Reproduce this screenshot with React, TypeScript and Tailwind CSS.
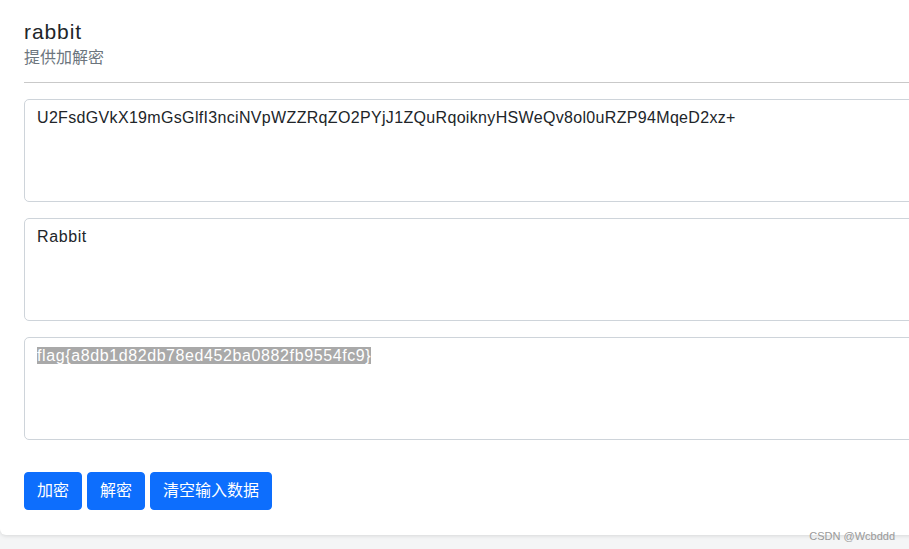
export default function App() {
  const font = { fontFamily: '"Liberation Sans", "Noto Sans CJK SC", sans-serif' };
  const boxes = [
    {
      text: "U2FsdGVkX19mGsGlfI3nciNVpWZZRqZO2PYjJ1ZQuRqoiknyHSWeQv8ol0uRZP94MqeD2xz+",
      sel: false,
      track: "tracking-[0.33px]",
    },
    { text: "Rabbit", sel: false, track: "tracking-[0.6px]" },
    { text: "flag{a8db1d82db78ed452ba0882fb9554fc9}", sel: true, track: "tracking-[0.6px]" },
  ];
  return (
    <div className="w-[909px] h-[549px] overflow-hidden bg-[#f4f5f6] relative" style={font}>
      <div className="w-[940px] bg-white rounded-b-[6px] shadow-[0_1px_4px_rgba(0,0,0,0.12)] pl-6 pr-0 pt-[18px] pb-[25px]">
        <div className="text-[21px] leading-[28px] tracking-[0.9px] text-[#212529]">rabbit</div>
        <div className="text-[16px] leading-[22px] text-[#6c757d] mt-[1px]">提供加解密</div>
        <div className="h-px bg-[#c9c9c9] mt-[13px]"></div>
        <div className="flex flex-col gap-[16px] mt-[16px]">
          {boxes.map((b, i) => (
            <div
              key={i}
              className={`h-[103px] border border-[#ced4da] rounded-[5px] px-3 pt-[6px] text-[16px] leading-[24px] text-[#212529] ${b.track}`}
            >
              {b.sel ? <span className="bg-[#a9a9a9] text-white">{b.text}</span> : b.text}
            </div>
          ))}
        </div>
        <div className="flex gap-[5px] mt-[32px]">
          <button className="h-[38px] px-3 border border-[#0d6efd] bg-[#0d6efd] text-white text-[16px] rounded-[4px]">加密</button>
          <button className="h-[38px] px-3 border border-[#0d6efd] bg-[#0d6efd] text-white text-[16px] rounded-[4px]">解密</button>
          <button className="h-[38px] px-3 border border-[#0d6efd] bg-[#0d6efd] text-white text-[16px] rounded-[4px]">清空输入数据</button>
        </div>
      </div>
      <div className="absolute right-[14px] top-[528px] text-[11px] text-[#9a9a9a]">CSDN @Wcbddd</div>
    </div>
  );
}
